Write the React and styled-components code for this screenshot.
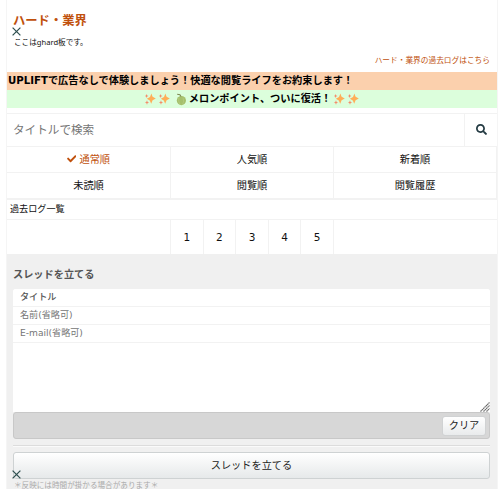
import React from 'react';
import styled, { createGlobalStyle } from 'styled-components';
import { FaSearch, FaCheck } from 'react-icons/fa';

const sorts = ['通常順', '人気順', '新着順', '未読順', '閲覧順', '閲覧履歴'];
const pages = [1, 2, 3, 4, 5];

const Cross = () => (
	<svg width='9' height='9' viewBox='0 0 9 9'>
		<path d='M.6 .6 8.4 8.4M8.4 .6.6 8.4' stroke='#2f4f4f' strokeWidth='1.25' />
	</svg>
);

const Sparkles = () => (
	<svg width='12' height='12' viewBox='0 0 12 12'>
		<path
			d='M7.4 .5 8.6 3.8 11.8 5.6 8.6 7.2 7.2 10.7 5.8 7.4 2.8 5.8 6 4Z'
			fill='#ffae58'
		/>
		<path
			d='M2.6 1 3.2 2.5 4.5 3 3.2 3.6 2.6 5 2 3.6.8 3 2 2.5ZM3 7.2 3.6 8.9 5.2 9.5 3.6 10.1 3 11.7 2.3 10.1.8 9.5 2.3 8.9Z'
			fill='#f48a68'
		/>
	</svg>
);

const Melon = () => (
	<svg width='12' height='13' viewBox='0 0 12 13'>
		<circle cx='6.4' cy='7.6' r='4.6' fill='#a5c06c' />
		<path d='M3.8 5Q3 8 5 11.4M8 4.6Q9.6 8 7.5 11.6' stroke='#b9cf87' strokeWidth='.6' fill='none' />
		<path d='M2.2 1.3 4.9 1.7 6 3.5' stroke='#7d8951' strokeWidth='1.1' fill='none' />
	</svg>
);

const Grip = () => (
	<svg width='10' height='10' viewBox='0 0 10 10'>
		<path d='M.5 9.5 9.5 .5M3.5 9.5 9.5 3.5M6.5 9.5 9.5 6.5' stroke='#666' strokeWidth='1.1' strokeDasharray='1.6 .3' />
	</svg>
);

const App = () => {
	return (
		<>
			<GlobalStyle />
			<Container>
				<Header>
					<h1>ハード・業界</h1>
					<Cross />
					<p>ここはghard板です。</p>
					<a>ハード・業界の過去ログはこちら</a>
				</Header>
				<Banner $color='#fbd0ad'>
					<span>UPLIFTで広告なしで体験しましょう！快適な閲覧ライフをお約束します！</span>
				</Banner>
				<Banner $color='#dcfedc' $center>
					<Sparkles />
					<Sparkles />
					<Melon />
					<span>メロンポイント、ついに復活！</span>
					<Sparkles />
					<Sparkles />
				</Banner>
				<Search>
					<input placeholder='タイトルで検索' />
					<button>
						<FaSearch size={11} />
					</button>
				</Search>
				<SortGrid>
					{sorts.map((sort, i) => (
						<SortItem key={sort} $active={i === 0}>
							{i === 0 && <FaCheck size={9.5} />}
							{sort}
						</SortItem>
					))}
				</SortGrid>
				<Archive>過去ログ一覧</Archive>
				<Pager>
					<div className='pages'>
						{pages.map((page) => (
							<div key={page}>{page}</div>
						))}
					</div>
				</Pager>
				<Form>
					<h2>スレッドを立てる</h2>
					<Fields>
						<Field $title placeholder='タイトル' />
						<Field placeholder='名前(省略可)' />
						<Field placeholder='E-mail(省略可)' />
						<Message>
							<Grip />
						</Message>
					</Fields>
					<Toolbar>
						<button>クリア</button>
					</Toolbar>
					<Divider />
					<Submit>スレッドを立てる</Submit>
					<Note>＊反映には時間が掛かる場合があります＊</Note>
					<FloatingClose>
						<Cross />
					</FloatingClose>
				</Form>
			</Container>
		</>
	);
};

const GlobalStyle = createGlobalStyle`
	* {
		box-sizing: border-box;
	}

	body {
		margin: 0;
		height: 489px;
		overflow: hidden;
		background: #fff;
	}

	body, input, button {
		font-family: 'DejaVu Sans', 'Noto Sans CJK JP', sans-serif;
	}

	h1, h2, p {
		margin: 0;
	}

	svg {
		display: block;
		flex-shrink: 0;
	}

	button {
		padding: 0;
		cursor: pointer;
	}
`;

const Container = styled.div`
	width: 492px;
	height: 489px;
	margin-left: 6px;
	border: solid #f5f5f5;
	border-width: 0 1px;
	overflow: hidden;
	color: #111;
	font-size: 10.2px;
`;

const Header = styled.div`
	display: flex;
	flex-direction: column;
	height: 72px;
	padding: 13px 7px 0 6px;

	h1 {
		height: 14px;
		font-size: 12.3px;
		line-height: 16px;
		color: #c0500c;
	}

	svg {
		margin-left: -1px;
	}

	p {
		height: 12px;
		padding-left: 1px;
		font-family: 'Noto Sans', 'Noto Sans CJK JP', sans-serif;
		font-size: 7.6px;
		line-height: 12px;
	}

	a {
		margin-top: 6px;
		align-self: flex-end;
		font-size: 7.7px;
		line-height: 14px;
		color: #c0500c;
	}
`;

const Banner = styled.div`
	display: flex;
	align-items: center;
	justify-content: ${(props) => (props.$center ? 'center' : 'flex-start')};
	gap: 2px;
	height: 18px;
	padding: 0 2px 0 1px;
	background: ${(props) => props.$color};
	color: #000;
	font-size: 10.2px;
	font-weight: bold;
	line-height: 16px;
	white-space: nowrap;

	svg:nth-child(3) {
		margin-left: 3px;
	}
`;

const Search = styled.div`
	display: flex;
	height: 34px;
	margin-top: 5px;
	border-top: 1px solid #f2f2f2;
	border-bottom: 1px solid #f2f2f2;

	input {
		flex: 1;
		padding: 0 6px 1px;
		border: 0;
		outline: 0;
		font-size: 11.6px;
	}

	input::placeholder {
		color: #757575;
	}

	button {
		display: flex;
		align-items: center;
		justify-content: center;
		width: 33px;
		padding-bottom: 1px;
		border: 0;
		border-left: 1px solid #f2f2f2;
		background: #fff;
		color: #243b43;
	}
`;

const SortGrid = styled.div`
	display: grid;
	grid-template-columns: 164px 163px 163px;
	border-bottom: 1px solid #f2f2f2;
`;

const SortItem = styled.div`
	display: flex;
	align-items: center;
	justify-content: center;
	gap: 3px;
	height: 26px;
	padding-bottom: 2px;
	border-right: 1px solid #f2f2f2;
	border-bottom: 1px solid #f2f2f2;
	color: ${(props) => (props.$active ? '#c0500c' : '#111')};
`;

const Archive = styled.div`
	height: 20px;
	padding-left: 3px;
	border-bottom: 1px solid #f2f2f2;
	font-size: 9.1px;
	line-height: 19px;
`;

const Pager = styled.div`
	display: flex;
	height: 34px;
	padding-left: 163px;

	.pages {
		display: grid;
		grid-template-columns: repeat(5, 1fr);
		width: 164px;
		border-left: 1px solid #f2f2f2;
		font-size: 10.5px;
		line-height: 34px;
		text-align: center;
	}

	.pages div {
		border-right: 1px solid #f2f2f2;
	}
`;

const Form = styled.div`
	position: relative;
	height: 235px;
	padding: 12px 7px 0 6px;
	background: #f0f0f0;

	h2 {
		height: 23px;
		padding-top: 1px;
		font-size: 10.2px;
		line-height: 15px;
		color: #555;
	}
`;

const Fields = styled.div`
	display: flex;
	flex-direction: column;
	height: 123px;
	border-radius: 3px 3px 0 0;
	background: #fff;
	overflow: hidden;
`;

const Field = styled.input`
	height: 18px;
	padding: 0 7px 1px;
	border: 0;
	border-bottom: 1px solid #f2f2f2;
	outline: 0;
	font-size: 9.1px;

	&::placeholder {
		color: ${(props) => (props.$title ? '#555' : '#757575')};
		font-weight: ${(props) => (props.$title ? 500 : 400)};
	}
`;

const Message = styled.div`
	display: flex;
	flex: 1;
	align-items: flex-end;
	justify-content: flex-end;
`;

const Toolbar = styled.div`
	display: flex;
	align-items: center;
	justify-content: flex-end;
	height: 27px;
	padding-right: 3px;
	border: 1px solid #c8c8c8;
	border-radius: 3px;
	background: #d7d7d7;

	button {
		width: 44px;
		height: 20px;
		border: 1px solid #d0d2d3;
		border-radius: 3px;
		background: linear-gradient(#fff, #e9ebec);
		color: #222;
		font-size: 10.2px;
		line-height: 17px;
	}
`;

const Divider = styled.div`
	height: 2px;
	margin: 6px 0 5px;
	border-top: 1px solid #dcdcdc;
	border-bottom: 1px solid #fafafa;
`;

const Submit = styled.button`
	display: block;
	width: 477px;
	height: 27px;
	border: 1px solid #ced2d3;
	border-radius: 3px;
	background: linear-gradient(#fff, #e6e9ea);
	color: #222;
	font-size: 10.2px;
	line-height: 25px;
`;

const Note = styled.p`
	padding-left: 1px;
	color: #aaa;
	font-size: 7.6px;
	line-height: 13px;
`;

/* stays over the form's lower left corner */
const FloatingClose = styled.div`
	position: absolute;
	left: 5px;
	bottom: 10px;
`;

export default App;
